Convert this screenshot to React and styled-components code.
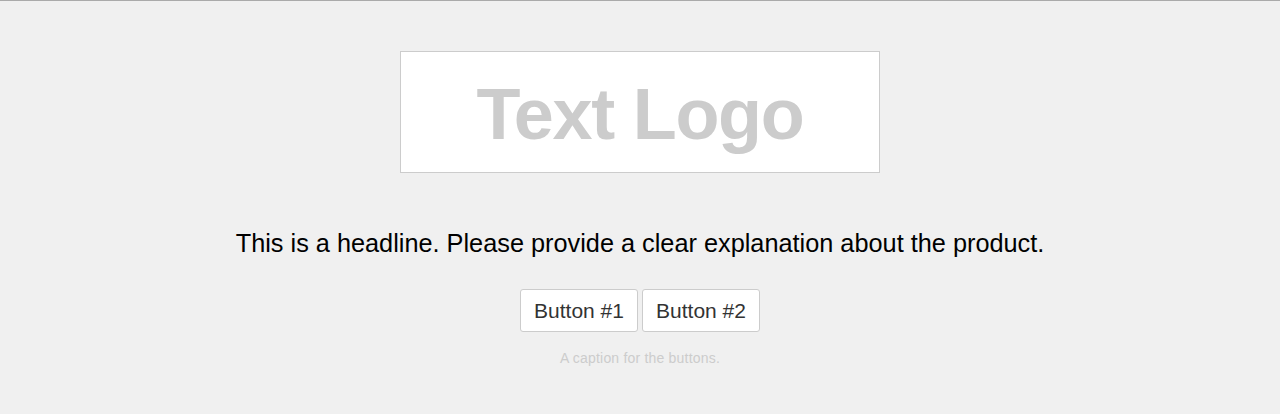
import React from "react";
import styled, { createGlobalStyle } from "styled-components";

const Global = createGlobalStyle`
  html, body { margin: 0; padding: 0; background: #f0f0f0; }
  body { font-family: "Liberation Sans", Arial, sans-serif; }
`;

const Page = styled.div`
  height: 414px;
  box-sizing: border-box;
  border-top: 1px solid #aaaaaa;
  background: #f0f0f0;
  display: flex;
  flex-direction: column;
  align-items: center;
  padding-top: 50px;
`;

const LogoBox = styled.div`
  width: 480px;
  height: 122px;
  box-sizing: border-box;
  background: #fff;
  border: 1px solid #cccccc;
  display: flex;
  align-items: center;
  justify-content: center;
`;

const LogoText = styled.h1`
  margin: 4px 0 0;
  font-size: 72px;
  font-weight: 700;
  color: #cccccc;
  letter-spacing: -1.3px;
  line-height: 1;
`;

const Headline = styled.p`
  margin: 54px 0 0;
  font-size: 25.3px;
  line-height: 32px;
  color: #000;
`;

const ButtonRow = styled.div`
  margin-top: 30px;
  display: flex;
  gap: 4px;
`;

const Button = styled.button`
  width: 118px;
  height: 43px;
  box-sizing: border-box;
  background: #fff;
  border: 1px solid #cccccc;
  border-radius: 3px;
  font-family: "Liberation Sans", Arial, sans-serif;
  font-size: 21px;
  color: #333;
  padding: 0;
`;

const Caption = styled.p`
  margin: 18px 0 0;
  font-size: 14px;
  letter-spacing: 0.2px;
  color: #cccccc;
`;

export default function App() {
  return (
    <>
      <Global />
      <Page>
        <LogoBox>
          <LogoText>Text Logo</LogoText>
        </LogoBox>
        <Headline>This is a headline. Please provide a clear explanation about the product.</Headline>
        <ButtonRow>
          <Button>Button #1</Button>
          <Button>Button #2</Button>
        </ButtonRow>
        <Caption>A caption for the buttons.</Caption>
      </Page>
    </>
  );
}
